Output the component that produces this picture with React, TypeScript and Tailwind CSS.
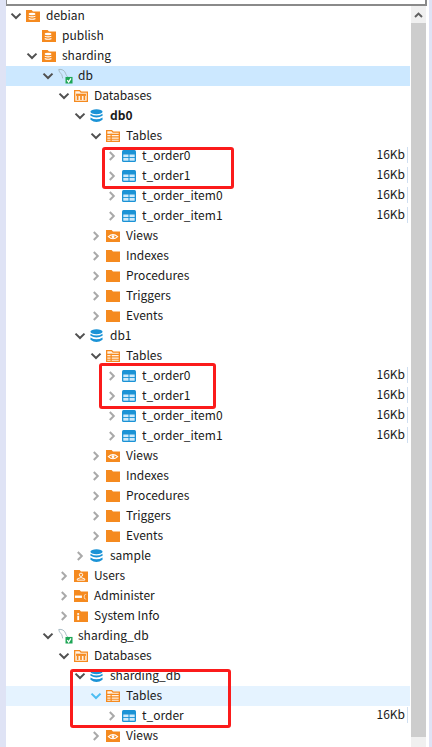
import React from "react";

const ORANGE = "#f58a1f";
const BLUE = "#1b93d6";

const FolderBase = ({ children }: { children?: React.ReactNode }) => (
  <svg width="14" height="12" viewBox="0 0 15 13" preserveAspectRatio="none" className="block">
    <path d="M0 0 H6 L7.5 1.5 H15 V13 H0 Z" fill={ORANGE} />
    {children}
  </svg>
);

const ConnFolder = () => (
  <FolderBase>
    <ellipse cx="6.5" cy="4.4" rx="3.6" ry="1.3" fill="#fff" />
    <path d="M2.9 6.2 Q6.5 7.5 10.1 6.2 V7.4 Q6.5 8.7 2.9 7.4 Z" fill="#fff" />
    <path d="M2.9 8.8 Q6.5 10.1 10.1 8.8 V10 Q6.5 11.3 2.9 10 Z" fill="#fff" />
  </FolderBase>
);

const Mysql = () => (
  <svg width="16" height="16" viewBox="0 0 16 16" className="block">
    <path d="M0.8 1 C4 0.5 7 2 8 5 C8.6 7 9.5 8.2 10.5 9 M0.8 1 C1.2 4 3 5 4 6.5 C4.5 7.5 4.5 9 5 10.5" fill="none" stroke="#a3b6c0" strokeWidth="1" />
    <rect x="8" y="9" width="7.5" height="7" fill="#1ea656" />
    <path d="M9.8 12.4 L11.4 14.4 L13.8 10.6" fill="none" stroke="#fff" strokeWidth="1.4" />
  </svg>
);

const DatabasesIcon = () => (
  <svg width="14" height="12" viewBox="0 0 15 13" preserveAspectRatio="none" className="block">
    <path d="M0.7 0.7 H6 L7.5 2.2 H14.3 V12.3 H0.7 Z" fill="#fff3e6" stroke={ORANGE} strokeWidth="1.4" />
    <rect x="2.2" y="4" width="10.6" height="2.4" fill={ORANGE} />
    <rect x="3" y="6.4" width="1.8" height="4.4" fill={ORANGE} />
    <rect x="6.6" y="6.4" width="1.8" height="4.4" fill={ORANGE} />
    <rect x="10.2" y="6.4" width="1.8" height="4.4" fill={ORANGE} />
  </svg>
);

const DbIcon = () => (
  <svg width="13" height="14" viewBox="0 0 14 15" preserveAspectRatio="none" className="block">
    <ellipse cx="7" cy="3" rx="6.5" ry="2.7" fill={BLUE} />
    <path d="M0.5 5 Q7 9 13.5 5 V7.2 Q7 11 0.5 7.2 Z" fill={BLUE} />
    <path d="M0.5 9 Q7 13 13.5 9 V11.5 Q7 16.5 0.5 11.5 Z" fill={BLUE} />
  </svg>
);

const TablesIcon = () => (
  <svg width="14" height="12" viewBox="0 0 15 13" preserveAspectRatio="none" className="block">
    <path d="M0.7 0.7 H6 L7.5 2.2 H14.3 V12.3 H0.7 Z" fill="#fff3e6" stroke={ORANGE} strokeWidth="1.4" />
    <path d="M1 4.8 H14 M1 7.5 H14 M1 10 H14" stroke={ORANGE} strokeWidth="1.3" />
    <path d="M5.5 4 V12" stroke={ORANGE} strokeWidth="1.3" />
  </svg>
);

const TableIcon = () => (
  <svg width="14" height="12" viewBox="0 0 14 12" className="block">
    <rect x="0" y="0" width="14" height="12" rx="1.5" fill={BLUE} />
    <rect x="1.3" y="4.5" width="5.2" height="2.6" fill="#cfeafa" />
    <rect x="7.5" y="4.5" width="5.2" height="2.6" fill="#cfeafa" />
    <rect x="1.3" y="8" width="5.2" height="2.7" fill="#cfeafa" />
    <rect x="7.5" y="8" width="5.2" height="2.7" fill="#cfeafa" />
  </svg>
);

const ViewsIcon = () => (
  <FolderBase>
    <path d="M2.5 7.2 Q7.5 2.8 12.5 7.2 Q7.5 11.6 2.5 7.2 Z" fill="none" stroke="#fff" strokeWidth="1.1" />
    <circle cx="7.5" cy="7.2" r="1.5" fill="#fff" />
  </FolderBase>
);

const UsersIcon = () => (
  <FolderBase>
    <circle cx="7.5" cy="5.2" r="1.8" fill="none" stroke="#fff" strokeWidth="1" />
    <path d="M3.5 11 V9.6 Q7.5 6.8 11.5 9.6 V11 Z" fill="none" stroke="#fff" strokeWidth="1" />
  </FolderBase>
);

const AdminIcon = () => (
  <FolderBase>
    <rect x="1" y="6" width="7.5" height="2.6" fill="#fff" />
    <path d="M13.5 4.3 A3 3 0 1 0 13.5 10.3 L11.2 8.6 V6 Z" fill="#fff" />
  </FolderBase>
);

const InfoIcon = () => (
  <FolderBase>
    <rect x="3.5" y="3.4" width="2" height="1.8" fill="#fff" />
    <rect x="3.5" y="6.2" width="2" height="4.8" fill="#fff" />
  </FolderBase>
);

const PlainFolder = () => <FolderBase />;

const Chevron = ({ state }: { state: "open" | "closed" | "active" | "none" }) => {
  if (state === "none") return <span className="w-3 shrink-0" />;
  if (state === "closed")
    return (
      <span className="w-3 shrink-0 flex justify-center">
        <svg width="8" height="12" viewBox="0 0 8 12" className="block">
          <path d="M1.8 2 L5.8 6 L1.8 10" fill="none" stroke="#a9a9a9" strokeWidth="2" />
        </svg>
      </span>
    );
  return (
    <span className="w-3 shrink-0 flex justify-center">
      <svg width="12" height="8" viewBox="0 0 12 8" className="block">
        <path d="M1.5 1.6 L6 6 L10.5 1.6" fill="none" stroke={state === "open" ? "#505050" : "#4cbdf2"} strokeWidth="2" />
      </svg>
    </span>
  );
};

type Row = {
  label: string;
  depth: number;
  icon: React.ReactNode;
  chevron: "open" | "closed" | "active" | "none";
  size?: boolean;
  bold?: boolean;
  bg?: string;
};

const INDENT = [
  "pl-[4px]",
  "pl-[20px]",
  "pl-[36px]",
  "pl-[52px]",
  "pl-[68px]",
  "pl-[84px]",
  "pl-[100px]",
];

const dbChildren = (): Row[] => [
  { label: "Tables", depth: 5, icon: <TablesIcon />, chevron: "open" },
  { label: "t_order0", depth: 6, icon: <TableIcon />, chevron: "closed", size: true },
  { label: "t_order1", depth: 6, icon: <TableIcon />, chevron: "closed", size: true },
  { label: "t_order_item0", depth: 6, icon: <TableIcon />, chevron: "closed", size: true },
  { label: "t_order_item1", depth: 6, icon: <TableIcon />, chevron: "closed", size: true },
  { label: "Views", depth: 5, icon: <ViewsIcon />, chevron: "closed" },
  { label: "Indexes", depth: 5, icon: <PlainFolder />, chevron: "closed" },
  { label: "Procedures", depth: 5, icon: <PlainFolder />, chevron: "closed" },
  { label: "Triggers", depth: 5, icon: <PlainFolder />, chevron: "closed" },
  { label: "Events", depth: 5, icon: <PlainFolder />, chevron: "closed" },
];

const rows: Row[] = [
  { label: "debian", depth: 0, icon: <ConnFolder />, chevron: "open" },
  { label: "publish", depth: 1, icon: <ConnFolder />, chevron: "none" },
  { label: "sharding", depth: 1, icon: <ConnFolder />, chevron: "open" },
  { label: "db", depth: 2, icon: <Mysql />, chevron: "open", bg: "bg-[#cce8ff]" },
  { label: "Databases", depth: 3, icon: <DatabasesIcon />, chevron: "open" },
  { label: "db0", depth: 4, icon: <DbIcon />, chevron: "open", bold: true },
  ...dbChildren(),
  { label: "db1", depth: 4, icon: <DbIcon />, chevron: "open" },
  ...dbChildren(),
  { label: "sample", depth: 4, icon: <DbIcon />, chevron: "closed" },
  { label: "Users", depth: 3, icon: <UsersIcon />, chevron: "closed" },
  { label: "Administer", depth: 3, icon: <AdminIcon />, chevron: "closed" },
  { label: "System Info", depth: 3, icon: <InfoIcon />, chevron: "closed" },
  { label: "sharding_db", depth: 2, icon: <Mysql />, chevron: "open" },
  { label: "Databases", depth: 3, icon: <DatabasesIcon />, chevron: "open" },
  { label: "sharding_db", depth: 4, icon: <DbIcon />, chevron: "open" },
  { label: "Tables", depth: 5, icon: <TablesIcon />, chevron: "active", bg: "bg-[#e5f3ff]" },
  { label: "t_order", depth: 6, icon: <TableIcon />, chevron: "closed", size: true },
  { label: "Views", depth: 5, icon: <ViewsIcon />, chevron: "closed" },
];

const TreeRow = ({ row }: { row: Row }) => (
  <div className={`h-5 flex items-center ${INDENT[row.depth]} ${row.bg ?? ""}`}>
    <Chevron state={row.chevron} />
    <span className="w-[15px] ml-1 shrink-0 flex justify-start">{row.icon}</span>
    <span className={`ml-[5px] pb-[2px] text-[12px] leading-[18px] text-[#1a1a1a] whitespace-nowrap ${row.bold ? "font-bold" : ""}`}>
      {row.label}
    </span>
    {row.size && (
      <span className="ml-auto mr-[2px] flex items-center">
        <span className="pb-[4px] text-[12px] leading-[16px] text-[#1a1a1a]">16Kb</span>
        <span className="ml-[2px] mb-[3px] w-px h-4 bg-[#d0dff0]" />
      </span>
    )}
  </div>
);

const Box = ({ className }: { className: string }) => (
  <div className={`absolute border-[3px] border-[#fb1b1b] rounded-[3px] ${className}`} />
);

export default function App() {
  return (
    <div className="relative w-[432px] h-[747px] overflow-hidden bg-white flex font-['Noto_Sans_CJK_SC','Noto_Sans',sans-serif]">
      <div className="w-[6px] shrink-0 bg-[#dfe3f5]" />
      <div className="flex-1 flex flex-col">
        <div className="h-[6px] shrink-0 border-l border-b-2 border-r-2 border-[#8a8a8a] mr-[5px]" />
        <div className="flex-1 flex min-h-0 pr-[6px]">
          <div className="flex-1 min-w-0 mr-px">
            {rows.map((r, i) => (
              <TreeRow key={i} row={r} />
            ))}
          </div>
          <div className="w-[15px] shrink-0 flex flex-col">
            <div className="h-[17px] bg-[#f0f0f0] flex items-center justify-center">
              <svg width="9" height="6" viewBox="0 0 9 6" className="block">
                <path d="M1 5 L4.5 1.6 L8 5" fill="none" stroke="#606060" strokeWidth="2" />
              </svg>
            </div>
            <div className="flex-1 bg-[#cdcdcd]" />
            <div className="h-[10px] bg-[#f0f0f0]" />
          </div>
        </div>
      </div>
      <div className="absolute right-0 top-0 bottom-0 w-[3px] bg-[#dfe3f5]" />
      <Box className="left-[102px] top-[147px] w-[132px] h-[42px]" />
      <Box className="left-[99px] top-[363px] w-[117px] h-[46px]" />
      <Box className="left-[70px] top-[669px] w-[161px] h-[59px]" />
    </div>
  );
}
